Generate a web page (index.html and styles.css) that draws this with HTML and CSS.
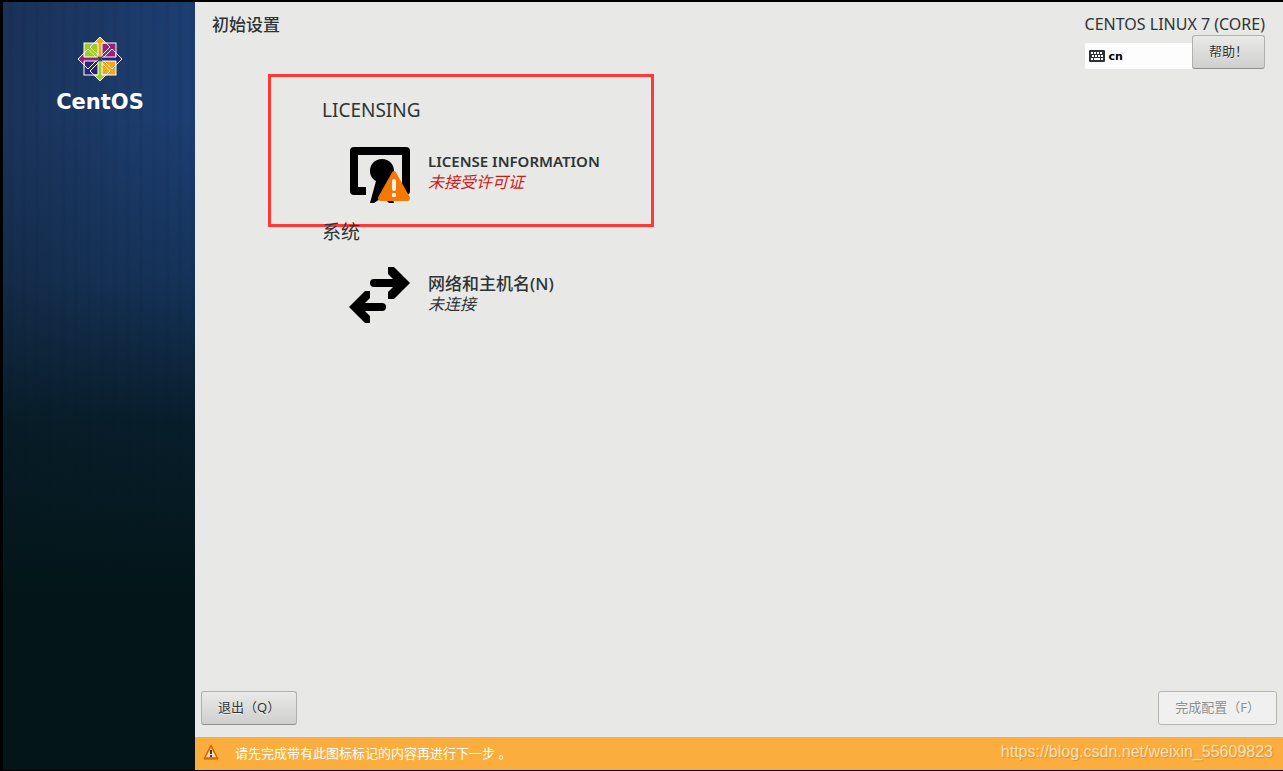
FILE: index.html
```
<!DOCTYPE html>
<html lang="zh-CN">
<head>
    <meta charset="UTF-8">
    <meta name="viewport" content="width=device-width, initial-scale=1.0">
    <title>初始设置</title>
    <link rel="stylesheet" href="styles.css">
</head>
<body>
    <aside class="sidebar">
        <svg class="logo" width="46" height="46" viewBox="0 0 46 46" aria-hidden="true">
            <g stroke="#fff" stroke-width="1">
                <rect x="7" y="7" width="16" height="16" fill="#9ccd2a"/>
                <rect x="23" y="7" width="16" height="16" fill="#932279"/>
                <rect x="7" y="23" width="16" height="16" fill="#262577"/>
                <rect x="23" y="23" width="16" height="16" fill="#efa724"/>
            </g>
            <g stroke="#fff" stroke-width="1">
                <path d="M23 1L33 11L23 21L13 11Z" fill="none"/>
                <path d="M23 25L33 35L23 45L13 35Z" fill="none"/>
                <path d="M11 13L21 23L11 33L1 23Z" fill="none"/>
                <path d="M35 13L45 23L35 33L25 23Z" fill="none"/>
                <path d="M23 1L29 7H25V20L23 22L21 20V7H17Z" fill="#efa724"/>
                <path d="M45 23L39 29V25H26L24 23L26 21H39V17Z" fill="#262577"/>
                <path d="M23 45L17 39H21V26L23 24L25 26V39H29Z" fill="#9ccd2a"/>
                <path d="M1 23L7 17V21H20L22 23L20 25H7V29Z" fill="#932279"/>
            </g>
            <path d="M21 21L25 25M25 21L21 25" stroke="#1c3c6c" stroke-width="2"/>
        </svg>
        <span class="brand">CentOS</span>
    </aside>

    <main class="main">
        <header class="header">
            <h1 class="title">初始设置</h1>
            <div class="header-right">
                <div class="distro">CENTOS LINUX 7 (CORE)</div>
                <div class="tools">
                    <button class="keyboard" type="button">
                        <svg width="16" height="12" viewBox="0 0 16 12" aria-hidden="true">
                            <rect width="16" height="12" rx="1" fill="#2e3436"/>
                            <path d="M2 3H14M3 6H14" stroke="#fff" stroke-width="2" stroke-dasharray="2 1"/>
                            <path d="M2 9H4M5 9H11M12 9H14" stroke="#fff" stroke-width="2"/>
                        </svg>
                        cn
                    </button>
                    <button class="btn" type="button">帮助！</button>
                </div>
            </div>
        </header>

        <div class="content">
            <section class="category">
                <div class="highlight"></div>
                <h2>LICENSING</h2>
                <button class="spoke" type="button">
                    <svg width="64" height="64" viewBox="0 0 64 64" aria-hidden="true">
                        <path d="M6 5H58Q62 5 62 9V49Q62 53 58 53H54V13H10V45H18V53H6Q2 53 2 49V9Q2 5 6 5Z"/>
                        <path d="M34 17C41 17 46 22 46 29C46 34 43 38 39 40L46 61H41L35 55L26 61H22L28 39C24 37 22 33 22 29C22 22 27 17 34 17Z"/>
                        <path d="M46 31L60 56Q60 57 59 57H33Q32 57 32 56Z" fill="#f57900" stroke="#f57900" stroke-width="4" stroke-linejoin="round"/>
                        <path d="M46 39V47" stroke="#eeeeec" stroke-width="4" stroke-linecap="round"/>
                        <rect x="44" y="51" width="4" height="4" rx="1" fill="#eeeeec"/>
                    </svg>
                    <span class="spoke-text">
                        <strong class="latin">LICENSE INFORMATION</strong>
                        <em class="error">未接受许可证</em>
                    </span>
                </button>
            </section>

            <section class="category">
                <h2>系统</h2>
                <button class="spoke" type="button">
                    <svg width="64" height="64" viewBox="0 0 64 64" aria-hidden="true">
                        <path d="M40 3H46L62 19L46 35H40V28L45 23H26Q22 23 22 19Q22 15 26 15H45L40 10Z"/>
                        <path d="M22 27H17L1 43L17 59H22V52L17 47H34Q38 47 38 43Q38 39 34 39H17L22 34Z"/>
                    </svg>
                    <span class="spoke-text">
                        <strong>网络和主机名(N)</strong>
                        <em>未连接</em>
                    </span>
                </button>
            </section>
        </div>

        <div class="actions">
            <button class="btn" type="button">退出（Q）</button>
            <button class="btn" type="button" disabled>完成配置（F）</button>
        </div>

        <footer class="infobar">
            <svg width="16" height="16" viewBox="0 0 16 16" aria-hidden="true">
                <path d="M8 1L15 15H1Z" fill="#f57900" stroke="#c65a08" stroke-linejoin="round"/>
                <path d="M8 4L13 13H3Z" fill="#f8dcb8"/>
                <path d="M8 6V10M8 11V13" stroke="#3a3a3a" stroke-width="2"/>
            </svg>
            <span>请先完成带有此图标标记的内容再进行下一步 。</span>
            <a class="watermark" href="https://blog.csdn.net/weixin_55609823">https://blog.csdn.net/weixin_55609823</a>
        </footer>
    </main>
</body>
</html>
```
FILE: styles.css
```
* {
    box-sizing: border-box;
}

body {
    display: flex;
    min-height: 100vh;
    margin: 0;
    padding: 2px 0 1px 3px;
    background: #000;
    color: #2e3436;
    font-family: "Noto Sans", "Noto Sans CJK SC", sans-serif;
    font-size: 13px;
}

h1, h2 {
    margin: 0;
}

button {
    font-family: inherit;
    color: inherit;
    cursor: pointer;
}

.sidebar {
    display: flex;
    flex-direction: column;
    align-items: center;
    gap: 8px;
    flex: 0 0 192px;
    padding: 34px 0 0 2px;
    background:
        linear-gradient(to bottom, transparent 15%, rgba(3, 21, 24, 0.3) 36%, rgba(3, 21, 24, 0.8) 55%, #031518 78%),
        repeating-linear-gradient(to right, transparent 0 5px, rgba(5, 20, 45, 0.06) 7px 9px, transparent 11px 13px),
        linear-gradient(100deg, #1a3157, #1c3c6c 45%, #1d4380);
}

.brand {
    color: #fff;
    font-family: "DejaVu Sans", sans-serif;
    font-size: 21px;
    font-weight: bold;
    line-height: 24px;
}

.main {
    display: flex;
    flex: 1;
    flex-direction: column;
    background: #e8e8e6;
}

.header {
    display: flex;
    justify-content: space-between;
    padding: 12px 18px 0 17px;
}

.title {
    font-size: 17px;
    font-weight: 500;
    line-height: 21px;
}

.distro {
    font-size: 16px;
    line-height: 21px;
}

.tools {
    display: flex;
    align-items: flex-end;
}

.keyboard {
    display: flex;
    align-items: center;
    flex: 1;
    gap: 4px;
    height: 26px;
    padding: 0 4px;
    border: none;
    background: #fdfdfd;
    color: #000;
    font-family: "DejaVu Sans", sans-serif;
    font-size: 11px;
    font-weight: bold;
}

.btn {
    height: 34px;
    padding: 0 16px 4px;
    border: 1px solid #b0b0ac;
    border-bottom-color: #8f8f8b;
    border-radius: 3px;
    background: linear-gradient(#e9e9e7, #cfcfcd);
    font-size: 13px;
    text-shadow: 0 1px #f4f4f2;
}

.btn:disabled {
    border-color: #b4b4b0;
    background: #f0f0f0;
    color: #8d9091;
    cursor: default;
}

.content {
    flex: 1;
    padding: 27px 0 0 127px;
}

.category {
    position: relative;
    width: 332px;
    margin-bottom: 12px;
}

.category h2 {
    margin-bottom: 18px;
    font-size: 19px;
    font-weight: 400;
    line-height: 28px;
}

.highlight {
    position: absolute;
    top: -22px;
    right: 0;
    left: -54px;
    height: 153px;
    border: 3px solid #ff3838;
    pointer-events: none;
}

.spoke {
    display: flex;
    align-items: center;
    gap: 16px;
    margin-left: 26px;
    padding: 0;
    border: none;
    background: none;
    font-size: 16px;
    line-height: 21px;
    text-align: left;
}

.spoke-text {
    display: flex;
    flex-direction: column;
    padding-bottom: 4px;
}

.spoke strong {
    font-size: 17px;
    font-weight: 500;
}

.spoke .latin {
    font-size: 15px;
    font-weight: 600;
}

.spoke .error {
    color: #cc1a1a;
}

.actions {
    display: flex;
    justify-content: space-between;
    padding: 0 6px 12px;
}

.infobar {
    display: flex;
    align-items: center;
    gap: 16px;
    height: 33px;
    padding: 0 10px 3px 8px;
    background: #fbad3e;
    color: #fff;
}

.watermark {
    margin-left: auto;
    color: #fbe0b8;
    font-family: "Liberation Sans", Arial, sans-serif;
    font-size: 16px;
    text-decoration: none;
    text-shadow: 1px 1px 1px rgba(120, 90, 40, 0.3);
}
```
